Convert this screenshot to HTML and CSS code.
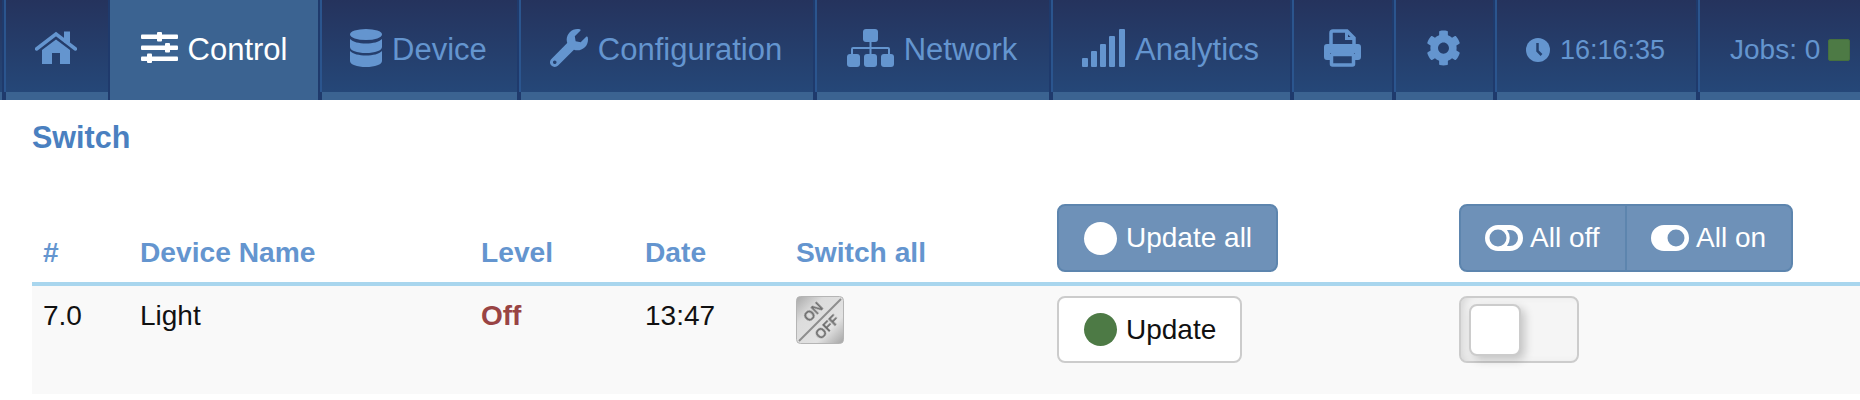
FILE: index.html
```html
<!DOCTYPE html>
<html lang="en">

<head>
    <meta charset="UTF-8">
    <meta name="viewport" content="width=device-width, initial-scale=1.0">
    <title>Switch</title>
    <link rel="stylesheet" href="styles.css">
</head>

<body>
    <nav class="top-bar">
        <div class="tab tab-edge"></div>
        <a class="tab tab-home">
            <svg class="icon" width="42" height="33" viewBox="0 0 42 33"><rect x="29" y="0.500" width="6" height="11"/><path class="roof" d="M1.500 18L21 3l19.500 15"/><path d="M7 19L21 8.500 35 19v14H25V22h-8v11H7z"/></svg>
        </a>
        <a class="tab tab-control active">
            <svg class="icon" width="37" height="31" viewBox="0 0 37 31"><rect y="2.500" width="37" height="4.500" rx="1"/><rect x="16" width="5" height="9.500" rx="1"/><rect y="13.500" width="37" height="4.500" rx="1"/><rect x="24" y="11" width="5" height="9.500" rx="1"/><rect y="24.500" width="37" height="4.500" rx="1"/><rect x="6" y="21.500" width="5" height="9.500" rx="1"/></svg>
            <span class="label">Control</span>
        </a>
        <a class="tab tab-device">
            <svg class="icon" width="32" height="38" viewBox="0 0 32 38"><ellipse cx="16" cy="5.500" rx="16" ry="5.500"/><path d="M0 10c3 3 9 4.500 16 4.500S29 13 32 10v8c0 3.500-7 6-16 6S0 21.500 0 18z"/><path d="M0 22c3 3 9 4.500 16 4.500S29 25 32 22v10c0 3.500-7 6-16 6S0 35.500 0 32z"/></svg>
            <span class="label">Device</span>
        </a>
        <a class="tab tab-config">
            <svg class="icon" width="38" height="38" viewBox="0 0 512 512"><path d="M507.73 109.1c-2.24-9.03-13.54-12.09-20.12-5.51l-74.36 74.36-67.88-11.31-11.31-67.88 74.36-74.36c6.62-6.62 3.43-17.9-5.66-20.16-47.38-11.74-99.55.91-136.58 37.93-39.64 39.64-50.55 97.1-34.05 147.2L18.74 402.76c-24.99 24.99-24.99 65.51 0 90.5 24.99 24.99 65.51 24.99 90.5 0l213.21-213.21c50.12 16.71 107.47 5.68 147.37-34.22 37.07-37.07 49.7-89.32 37.91-136.73zM64 472c-13.25 0-24-10.75-24-24 0-13.26 10.75-24 24-24s24 10.74 24 24c0 13.25-10.75 24-24 24z"/></svg>
            <span class="label">Configuration</span>
        </a>
        <a class="tab tab-network">
            <svg class="icon" width="47" height="38" viewBox="0 0 47 38"><rect x="16" width="15" height="13" rx="3"/><rect y="25" width="13" height="13" rx="3"/><rect x="17" y="25" width="13" height="13" rx="3"/><rect x="34" y="25" width="13" height="13" rx="3"/><path d="M22.500 12h2v6H41a2 2 0 0 1 2 2v6h-2v-6H24.500v6h-2v-6H6v6H4v-6a2 2 0 0 1 2-2h16.500z"/></svg>
            <span class="label">Network</span>
        </a>
        <a class="tab tab-analytics">
            <svg class="icon" width="43" height="38" viewBox="0 0 43 38"><rect y="29" width="6" height="9" rx="1"/><rect x="9" y="22" width="6" height="16" rx="1"/><rect x="18" y="15" width="6" height="23" rx="1"/><rect x="27" y="7" width="6" height="31" rx="1"/><rect x="37" width="6" height="38" rx="1"/></svg>
            <span class="label">Analytics</span>
        </a>
        <a class="tab tab-print">
            <svg class="icon" width="37" height="38" viewBox="0 0 37 38"><path d="M3 15h31a3 3 0 0 1 3 3v10a3 3 0 0 1-3 3h-3v-7H6v7H3a3 3 0 0 1-3-3V18a3 3 0 0 1 3-3z"/><path class="line" d="M7 15V4a2 2 0 0 1 2-2h14l7 7v6"/><path d="M21 2h3v6h6v3h-9z"/><rect class="line" x="7.500" y="25.500" width="22" height="10.500" rx="1"/></svg>
        </a>
        <a class="tab tab-cog">
            <svg class="icon" width="35" height="36" viewBox="0 0 512 512" preserveAspectRatio="none"><path d="M487.4 315.7l-42.6-24.6c4.3-23.2 4.3-47 0-70.2l42.6-24.6c4.9-2.8 7.1-8.6 5.5-14-11.1-35.6-30-67.8-54.7-94.6-3.8-4.1-10-5.1-14.8-2.3L380.8 110c-17.9-15.4-38.5-27.3-60.8-35.1V25.8c0-5.6-3.9-10.5-9.4-11.7-36.7-8.2-74.3-7.8-109.2 0-5.5 1.2-9.4 6.1-9.4 11.7V75c-22.2 7.9-42.8 19.8-60.8 35.1L88.7 85.5c-4.9-2.8-11-1.9-14.8 2.3-24.7 26.7-43.6 58.9-54.7 94.6-1.7 5.4.6 11.2 5.5 14L67.3 221c-4.3 23.2-4.3 47 0 70.2l-42.6 24.6c-4.9 2.8-7.1 8.6-5.5 14 11.1 35.6 30 67.8 54.7 94.6 3.8 4.1 10 5.1 14.8 2.3l42.6-24.6c17.9 15.4 38.5 27.3 60.8 35.1v49.2c0 5.6 3.9 10.5 9.4 11.7 36.7 8.2 74.3 7.8 109.2 0 5.5-1.2 9.4-6.1 9.4-11.7v-49.2c22.2-7.9 42.8-19.8 60.8-35.1l42.6 24.6c4.9 2.8 11 1.9 14.8-2.3 24.7-26.7 43.6-58.9 54.7-94.6 1.5-5.5-.7-11.3-5.6-14.1zM256 336c-44.1 0-80-35.9-80-80s35.9-80 80-80 80 35.9 80 80-35.9 80-80 80z"/></svg>
        </a>
        <div class="tab tab-time">
            <svg class="icon" width="24" height="24" viewBox="0 0 24 24"><circle cx="12" cy="12" r="12"/><path class="hand" d="M11.500 5v8l4 4"/></svg>
            16:16:35
        </div>
        <div class="tab tab-jobs">
            Jobs: 0
            <span class="job-light"></span>
        </div>
    </nav>

    <main class="content">
        <h2 class="page-title">Switch</h2>

        <table class="device-table">
            <thead>
                <tr>
                    <th class="col-id">#</th>
                    <th class="col-name">Device Name</th>
                    <th class="col-level">Level</th>
                    <th class="col-date">Date</th>
                    <th class="col-all">Switch all</th>
                    <th class="col-update">
                        <button class="btn btn-blue"><span class="dot dot-white"></span>Update all</button>
                    </th>
                    <th class="col-toggle">
                        <div class="btn-group">
                            <button class="btn btn-blue">
                                <svg class="toggle-icon" width="38" height="26" viewBox="0 0 38 26"><path fill-rule="evenodd" d="M13 0h12a13 13 0 0 1 0 26H13a13 13 0 0 1 0-26zm0 4.500a8.500 8.500 0 0 0 0 17 8.500 8.500 0 0 0 0-17zm9 .5h3a8 8 0 0 1 0 16h-3a13 13 0 0 0 0-16z"/></svg>
                                All off
                            </button>
                            <button class="btn btn-blue">
                                <svg class="toggle-icon" width="38" height="26" viewBox="0 0 38 26"><path fill-rule="evenodd" d="M13 0h12a13 13 0 0 1 0 26H13a13 13 0 0 1 0-26zm12 4.500a8.500 8.500 0 0 0 0 17 8.500 8.500 0 0 0 0-17z"/></svg>
                                All on
                            </button>
                        </div>
                    </th>
                </tr>
            </thead>
            <tbody>
                <tr>
                    <td>7.0</td>
                    <td>Light</td>
                    <td class="level-off">Off</td>
                    <td>13:47</td>
                    <td>
                        <svg class="switch-icon" width="48" height="48" viewBox="0 0 48 48">
                            <defs>
                                <linearGradient id="metal" x1="0" y1="0" x2="1" y2="1">
                                    <stop offset="0" stop-color="#a9a9a9"/>
                                    <stop offset="0.300" stop-color="#dcdcdc"/>
                                    <stop offset="0.700" stop-color="#e2e2e2"/>
                                    <stop offset="1" stop-color="#a4a4a4"/>
                                </linearGradient>
                                <filter id="soft"><feGaussianBlur stdDeviation="0.500"/></filter>
                            </defs>
                            <rect x="0.500" y="0.500" width="47" height="47" rx="4" fill="url(#metal)" stroke="#b5b5b5"/>
                            <path d="M45 3L3 45" stroke="#8e8e8e" stroke-width="2" filter="url(#soft)"/>
                            <text class="switch-text" filter="url(#soft)" transform="translate(17 16) rotate(-45)">ON</text>
                            <text class="switch-text" filter="url(#soft)" transform="translate(31 31) rotate(-45)">OFF</text>
                        </svg>
                    </td>
                    <td>
                        <button class="btn btn-white"><span class="dot dot-green"></span>Update</button>
                    </td>
                    <td>
                        <div class="toggle"><span class="toggle-knob"></span></div>
                    </td>
                </tr>
            </tbody>
        </table>
    </main>
</body>

</html>
```

FILE: styles.css
```css
/* Reset */
* {
    margin: 0;
    padding: 0;
    box-sizing: border-box;
    font-family: "Liberation Sans", Arial, sans-serif;
}

body {
    background-color: #fff;
    color: #111;
    overflow: hidden;
}

/* Top navigation */
.top-bar {
    display: flex;
    height: 100px;
    background-color: #1f3a6c;
}

.tab {
    display: flex;
    align-items: center;
    justify-content: center;
    gap: 10px;
    height: 100%;
    padding-bottom: 5px;
    margin-right: 2px;
    color: #6495cf;
    font-size: 31px;
    background:
        linear-gradient(#2b558e, #2b558e) left top / 2px 92px no-repeat,
        linear-gradient(#1f3a6c, #1f3a6c) left bottom / 2px 8px no-repeat,
        linear-gradient(#25335d, #254778 92px, #3b6391 92px);
}

.tab .label {
    padding-top: 5px;
}

.tab .icon {
    fill: #6495cf;
    flex-shrink: 0;
}

.tab .line {
    fill: none;
    stroke: #6495cf;
    stroke-width: 3.500;
}

.tab .roof {
    fill: none;
    stroke: #6495cf;
    stroke-width: 3.500;
    stroke-linecap: round;
}

.tab .hand {
    fill: none;
    stroke: #254270;
    stroke-width: 2.500;
}

.tab.active {
    color: #fff;
    background: #3b6391;
}

.tab.active .icon {
    fill: #fff;
}

.tab-edge { width: 2px; background: linear-gradient(#25335d, #254778 92px, #3b6391 92px); }
.tab-home { width: 104px; }
.tab-control { width: 208px; }
.tab-device { width: 197px; }
.tab-config { width: 294px; }
.tab-network { width: 234px; }
.tab-analytics { width: 239px; }
.tab-print { width: 100px; }
.tab-cog { width: 99px; }
.tab-time { width: 201px; padding-bottom: 0; font-size: 27px; }
.tab-jobs { flex: 1; margin-right: 0; padding: 0 0 0 32px; font-size: 28px; gap: 8px; justify-content: flex-start; }

.job-light {
    width: 22px;
    height: 22px;
    background-color: #4d7a45;
    border: 1px solid #46703f;
    border-radius: 2px;
}

/* Content */
.content {
    padding: 17px 0 0 32px;
}

.page-title {
    font-size: 30.500px;
    line-height: 40px;
    margin-bottom: 37px;
    color: #4a80c0;
}

.device-table {
    width: 1828px;
    table-layout: fixed;
    border-collapse: collapse;
    font-size: 28px;
    line-height: 40px;
}

.device-table th {
    padding: 10px 11px 10px;
    text-align: left;
    vertical-align: bottom;
    font-size: 28.200px;
    color: #6495cf;
    border-bottom: 4px solid #a9d6ee;
}

.device-table td {
    padding: 10px 11px 31px;
    vertical-align: top;
    background-color: #f9f9f9;
}

.col-id { width: 97px; }
.col-name { width: 341px; }
.col-level { width: 164px; }
.col-date { width: 151px; }
.col-all { width: 261px; }
.col-update { width: 402px; }
.col-toggle { width: 412px; }

.level-off {
    font-weight: bold;
    color: #994444;
}

.switch-icon {
    display: block;
}

.switch-text {
    font-size: 14px;
    font-weight: bold;
    fill: #6e6e6e;
    text-anchor: middle;
    dominant-baseline: central;
}

/* Buttons */
.btn {
    display: inline-flex;
    align-items: center;
    height: 68px;
    padding: 0 24px;
    border: 2px solid;
    border-radius: 8px;
    font-size: 28px;
    cursor: pointer;
}

.btn-blue {
    background-color: #6e91b8;
    border-color: #5d85ae;
    color: #fff;
}

.btn-white {
    background-color: #fff;
    border-color: #ccc;
    color: #111;
    height: 67px;
}

.btn-group {
    display: inline-flex;
}

.btn-group .btn {
    width: 167px;
}

.btn-group .btn:first-child {
    border-radius: 8px 0 0 8px;
    border-right-width: 1px;
}

.btn-group .btn:last-child {
    border-radius: 0 8px 8px 0;
    border-left-width: 1px;
}

.dot {
    width: 33px;
    height: 33px;
    margin-left: 1px;
    margin-right: 9px;
    border-radius: 50%;
}

.dot-white { background-color: #fff; }
.dot-green { background-color: #4d7a45; }

.toggle-icon {
    fill: #fff;
    margin-right: 7px;
    flex-shrink: 0;
}

/* Row switch */
.toggle {
    width: 120px;
    height: 67px;
    padding: 6px 8px;
    background-color: #f5f5f5;
    border: 2px solid #ccc;
    border-radius: 8px;
    box-shadow: inset 8px 0 14px -8px rgba(0, 0, 0, 0.2);
}

.toggle-knob {
    display: block;
    width: 52px;
    height: 52px;
    background-color: #fff;
    border: 2px solid #ccc;
    border-radius: 8px;
    box-shadow: 4px 4px 10px rgba(0, 0, 0, 0.2);
}
```
